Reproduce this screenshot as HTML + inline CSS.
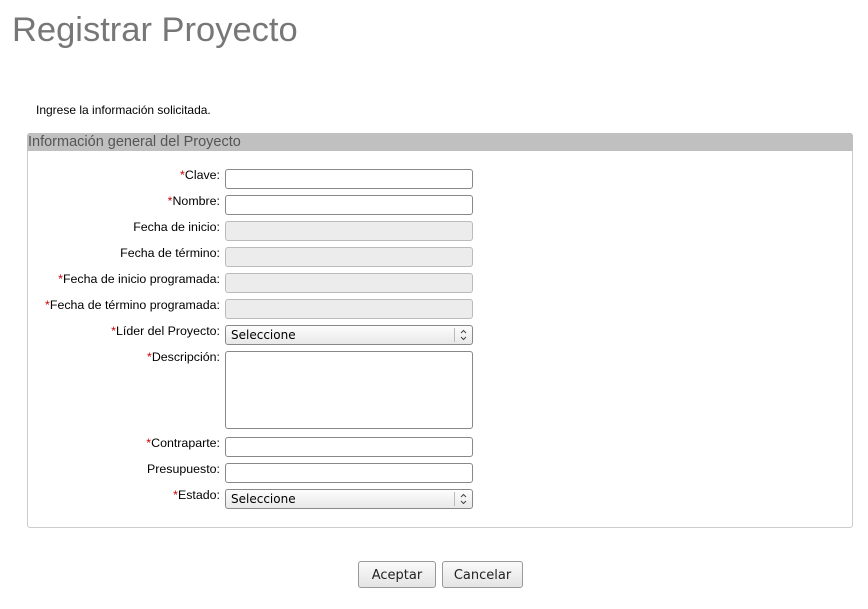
<!DOCTYPE html>
<html><head><style>
body{margin:0;width:868px;height:609px;background:#fff;font-family:"Liberation Sans",sans-serif;position:relative;overflow:hidden}
.a{position:absolute}
h1{position:absolute;left:12px;top:11px;margin:0;font-weight:normal;font-size:34.5px;color:#777}
.lab{position:absolute;right:648px;font-size:12.4px;color:#000;text-align:right;white-space:nowrap}
.lab b{color:#c00;font-weight:normal}
.in{position:absolute;left:225px;width:246px;height:18px;border:1px solid #888;border-radius:3px;background:#fff}
.dis{background:#ececec;border-color:#bbb}
.sel{background:linear-gradient(#fdfdfd,#e8e8e8);font-family:"DejaVu Sans",sans-serif;font-size:12px;line-height:18px;text-indent:5px}
.sel svg{position:absolute;right:0;top:2px;border-left:1px solid #bbb}
.btn{position:absolute;top:561px;height:25px;border:1px solid #999;border-radius:3px;background:linear-gradient(#fafafa,#e4e4e4);font-family:"DejaVu Sans",sans-serif;font-size:13px;line-height:27px;text-align:center;color:#222}
</style></head><body>
<h1>Registrar Proyecto</h1>
<div class="a" style="left:36px;top:103px;font-size:12px">Ingrese la información solicitada.</div>
<div class="a" style="left:27px;top:133px;width:824px;height:393px;border:1px solid #ccc;border-radius:3px"></div>
<div class="a" style="left:27px;top:133px;width:826px;height:18px;background:#c0c0c0;border-radius:3px 3px 0 0;font-size:14.5px;color:#555;line-height:19px;text-indent:1px">Información general del Proyecto</div>

<div class="lab" style="top:168px"><b>*</b>Clave:</div><div class="in" style="top:169px"></div>
<div class="lab" style="top:194px"><b>*</b>Nombre:</div><div class="in" style="top:195px"></div>
<div class="lab" style="top:220px">Fecha de inicio:</div><div class="in dis" style="top:221px"></div>
<div class="lab" style="top:246px">Fecha de término:</div><div class="in dis" style="top:247px"></div>
<div class="lab" style="top:272px"><b>*</b>Fecha de inicio programada:</div><div class="in dis" style="top:273px"></div>
<div class="lab" style="top:298px"><b>*</b>Fecha de término programada:</div><div class="in dis" style="top:299px"></div>
<div class="lab" style="top:324px"><b>*</b>Líder del Proyecto:</div><div class="in sel" style="top:325px">Seleccione<svg width="17" height="14" viewBox="0 0 17 14"><path d="M6 5l2.5-2.5L11 5M6 9l2.5 2.5L11 9" fill="none" stroke="#444"/></svg></div>
<div class="lab" style="top:350px"><b>*</b>Descripción:</div><div class="in" style="top:351px;height:76px"></div>
<div class="lab" style="top:436px"><b>*</b>Contraparte:</div><div class="in" style="top:437px"></div>
<div class="lab" style="top:462px">Presupuesto:</div><div class="in" style="top:463px"></div>
<div class="lab" style="top:488px"><b>*</b>Estado:</div><div class="in sel" style="top:489px">Seleccione<svg width="17" height="14" viewBox="0 0 17 14"><path d="M6 5l2.5-2.5L11 5M6 9l2.5 2.5L11 9" fill="none" stroke="#444"/></svg></div>

<div class="btn" style="left:358px;width:76px">Aceptar</div>
<div class="btn" style="left:442px;width:79px">Cancelar</div>
</body></html>
